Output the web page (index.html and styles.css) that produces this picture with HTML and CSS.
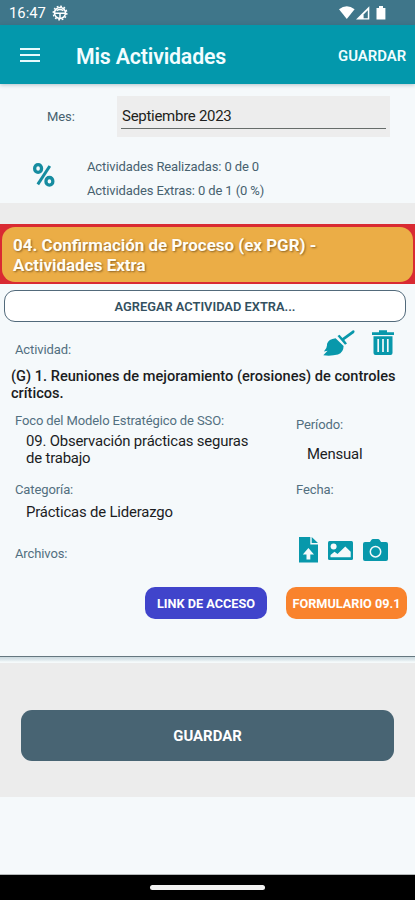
FILE: index.html
```html
<!DOCTYPE html>
<html lang="es">
<head>
<meta charset="utf-8">
<meta name="viewport" content="width=device-width, initial-scale=1">
<title>Mis Actividades</title>
<link rel="stylesheet" href="styles.css">
</head>
<body>
<div class="status">
  <span class="clock">16:47</span>
  <svg class="gear" viewBox="0 0 16 16"><circle cx="8" cy="8" r="5.5" fill="none" stroke="#fff" stroke-width="1.5"/><circle cx="8" cy="8" r="6.8" fill="none" stroke="#fff" stroke-width="1.4" stroke-dasharray="1.78 1.78"/><path d="M3 8.2h10M4.6 5.6Q8 3.6 11.4 5.6M8 8v5" fill="none" stroke="#fff" stroke-width="1.5"/></svg>
  <svg class="signals" viewBox="0 0 48 15"><path d="M0 3.2Q7.8-2.6 15.6 3.2L7.8 13Z" fill="#fff"/><path d="M17 13.500 30.300.300V13.500Z" fill="#fff"/><path d="M24.600 8.500 28.800 4.200V12.200H24.600Z" fill="#3f768a"/><path d="M37.500 2H40V0h4v2h2.400V13.500h-8.900Z" fill="#fff"/></svg>
</div>
<header class="appbar">
  <svg class="menu" viewBox="0 0 20 14"><path d="M0 1h20M0 7h20M0 13h20" stroke="#e6fbfd" stroke-width="2"/></svg>
  <h1 class="title">Mis Actividades</h1>
  <span class="save-link">GUARDAR</span>
</header>
<section class="summary">
  <div class="month-row">
    <label class="month-label">Mes:</label>
    <div class="month-field"><div class="month-value">Septiembre 2023</div></div>
  </div>
  <div class="stats">
    <svg class="percent" viewBox="0 0 22 24"><g fill="none" stroke="#168ca0" stroke-width="3.300"><rect x="1.700" y="1.700" width="6.800" height="7.600" rx="3.400"/><rect x="13" y="14.500" width="6.800" height="7.600" rx="3.400"/><path d="M16.800 3 4.800 21.400" stroke-width="3"/></g></svg>
    <div class="stats-text">
      <div>Actividades Realizadas: 0 de 0</div>
      <div>Actividades Extras: 0 de 1 (0 %)</div>
    </div>
  </div>
</section>
<div class="gap"></div>
<div class="banner"><h2 class="banner-inner">04. Confirmación de Proceso (ex PGR) -<br>Actividades Extra</h2></div>
<main class="card">
  <button class="add"><span>AGREGAR ACTIVIDAD EXTRA...</span></button>
  <div class="activity-head">
    <span class="label">Actividad:</span>
    <div class="tools">
      <svg class="broom" viewBox="0 0 32 26"><g fill="#0898ab"><path d="M30 .2Q32.500.3 31 3L21.300 10.100 24 13.600 22 14.800 14.500 5.900 16.500 4.800 19.400 8Z"/><path d="M12.600 8.200 20.600 16Q20.500 22.500 15 24.500 8 26.300.3 25.300L4.600 20.700.9 21.500Q4.500 17.800 4 14 5.500 9 12.600 8.200Z"/></g></svg>
      <svg class="trash" viewBox="0 0 22 25"><path d="M0 2.200H7V.3H15V2.200H22V5H0ZM1.500 6.200H20.500V23Q20.500 25 18.500 25H3.500Q1.500 25 1.500 23Z" fill="#0898ab"/><path d="M6.200 9v13M11 9v13M15.800 9v13" stroke="#f5f9fb" stroke-width="1.700"/></svg>
    </div>
  </div>
  <h3 class="activity-name">(G) 1. Reuniones de mejoramiento (erosiones) de controles<br>críticos.</h3>
  <div class="columns">
    <div class="col-left">
      <div class="label">Foco del Modelo Estratégico de SSO:</div>
      <div class="value">09. Observación prácticas seguras<br>de trabajo</div>
    </div>
    <div class="col-right">
      <div class="label">Período:</div>
      <div class="value mensual">Mensual</div>
    </div>
  </div>
  <div class="columns second">
    <div class="col-left">
      <div class="label">Categoría:</div>
      <div class="value category">Prácticas de Liderazgo</div>
    </div>
    <div class="col-right"><div class="label">Fecha:</div></div>
  </div>
  <div class="files">
    <span class="label">Archivos:</span>
    <div class="file-icons">
      <svg class="upload" viewBox="0 0 19 26"><path d="M0 0H11.300V7.400H19V25.500H0ZM12.700 0 19 6H12.700Z" fill="#0898ab"/><path d="M9.400 11 15 17.500H11.300V22.500H7.500V17.500H3.800Z" fill="#f5f9fb"/></svg>
      <svg class="image" viewBox="0 0 25 19"><rect width="25" height="19" rx="1.500" fill="#0898ab"/><circle cx="5.600" cy="5.600" r="3" fill="#f5f9fb"/><path d="M2.500 16.300V14L6.500 10.800 9.500 13 17.300 5.500 22.700 10.800V16.300Z" fill="#f5f9fb"/></svg>
      <svg class="camera" viewBox="0 0 25 22"><path d="M2 3H7L8.300 1Q9 0 10 0H15Q16 0 16.700 1L18 3H23Q25 3 25 5V20Q25 22 23 22H2Q0 22 0 20V5Q0 3 2 3Z" fill="#0898ab"/><circle cx="12.500" cy="12.700" r="5.200" fill="none" stroke="#f5f9fb" stroke-width="1.500"/></svg>
    </div>
  </div>
  <div class="actions">
    <button class="pill blue"><span>LINK DE ACCESO</span></button>
    <button class="pill orange"><span>FORMULARIO 09.1</span></button>
  </div>
</main>
<div class="card-edge"></div>
<section class="footer"><button class="save"><span>GUARDAR</span></button></section>
<div class="spacer"></div>
<nav class="navbar"><div class="handle"></div></nav>
</body>
</html>
```
FILE: styles.css
```css
* { box-sizing: border-box; margin: 0; padding: 0; }
body { width: 415px; height: 900px; overflow: hidden; background: #f5f9fb; font-family: Roboto, "Liberation Sans", sans-serif; font-weight: 400; color: #1b1d1f; white-space: nowrap; }
svg { display: block; flex: none; }
button { border: 0; font: inherit; display: flex; align-items: center; justify-content: center; }
.status { height: 25px; background: #3f768a; display: flex; align-items: center; padding-left: 9px; color: #fff; }
.clock { font-size: 14.800px; line-height: 25px; padding-top: 2px; width: 43px; }
.gear { width: 16px; height: 16px; margin-top: 1px; }
.signals { width: 48px; height: 15px; margin: 2px 0 0 271px; }
.appbar { height: 59px; background: #0398ac; display: flex; align-items: center; padding-left: 20px; color: #f2fdff; box-shadow: 0 1px 4px rgba(30, 70, 90, .3); position: relative; padding-top: 3px; }
.menu { width: 20px; height: 14px; margin-top: -3px; }
.title { font-size: 21.300px; letter-spacing: -.16px; font-weight: 600; margin-left: 36px; width: 262px; }
.save-link { font-size: 14.900px; font-weight: 600; }
.summary { height: 119px; padding-top: 12px; color: #47616f; font-size: 13px; }
.month-row { display: flex; height: 41px; }
.month-label { width: 117px; padding-left: 47px; line-height: 41px; letter-spacing: -.1px; }
.month-field { width: 273px; background: #ededed; padding: 5px 4px 0; }
.month-value { height: 28px; line-height: 30px; padding-left: 1px; border-bottom: 1px solid #666c6a; font-size: 15px; letter-spacing: -.28px; color: #1d1f20; }
.stats { display: flex; padding: 18px 0 0 33px; }
.percent { width: 22px; height: 24px; margin-top: 8px; }
.stats-text { margin-left: 32px; line-height: 24px; letter-spacing: -.11px; }
.gap { height: 21px; background: #ececec; }
.banner { height: 60px; background: #d92a32; padding: 3px 2px 2px; }
.banner-inner { height: 55px; border-radius: 13px; background: #ebad46; color: #fffdf5; font-size: 16.950px; line-height: 20px; font-weight: 700; padding: 8px 11px 0; text-shadow: 1px 1px 2px rgba(90, 60, 20, .65); }
.card { display: flow-root; height: 372px; }
.add { width: 402px; height: 32px; margin: 6px 0 0 4px; border: 1px solid #526a7b; border-radius: 11px; background: #fff; color: #33505f; font-size: 12.850px; font-weight: 600; }
.activity-head { display: flex; justify-content: space-between; height: 44px; padding: 8px 21px 0 15px; }
.label { font-size: 13px; line-height: 18px; letter-spacing: -.11px; color: #526f80; }
.activity-head .label { margin-top: 11px; }
.tools { display: flex; gap: 17px; }
.broom { width: 32px; height: 26px; }
.trash { width: 22px; height: 25px; }
.activity-name { font-size: 14.600px; line-height: 17px; font-weight: 500; padding-left: 11px; margin-top: 2px; }
.columns { display: flex; padding: 10px 0 0 15px; height: 69px; }
.col-left { width: 281px; }
.value { font-size: 14.900px; letter-spacing: -.18px; line-height: 17px; padding-left: 11px; margin-top: 3px; }
.columns .col-right { padding-top: 4px; }
.mensual { margin-top: 12px; }
.second { height: 60px; padding-top: 10px; }
.columns.second .col-right { padding-top: 0; }
.category { margin-top: 5px; }
.files { display: flex; height: 56px; padding: 6px 0 0 15px; }
.files .label { width: 284px; padding-top: 8px; }
.file-icons { display: flex; align-items: center; height: 26px; gap: 10px; }
.upload { width: 19px; height: 26px; }
.image { width: 25px; height: 19px; }
.camera { width: 25px; height: 22px; }
.actions { display: flex; gap: 19px; padding-left: 145px; }
.pill { width: 122px; height: 32px; border-radius: 10px; color: #fff; font-weight: 700; font-size: 12.700px; }
.blue { background: #4044cb; }
.orange { width: 121px; background: #f9832d; }
.card-edge { height: 7px; border-top: 1px solid #65777f; background: linear-gradient(#cbd9de 0, #dfe9ed 3px, #f5fafb 5px); }
.footer { height: 134px; background: #ececec; padding: 47px 21px 0; }
.save { width: 373px; height: 51px; border-radius: 11px; background: #486473; color: #fff; font-size: 14.900px; font-weight: 700; }
.spacer { height: 78px; border-bottom: 1px solid #b5b9ba; }
.navbar { height: 25px; background: #000; padding: 10px 0 0 150px; }
.handle { width: 115px; height: 5px; border-radius: 3px; background: #f2f2f2; }
```
